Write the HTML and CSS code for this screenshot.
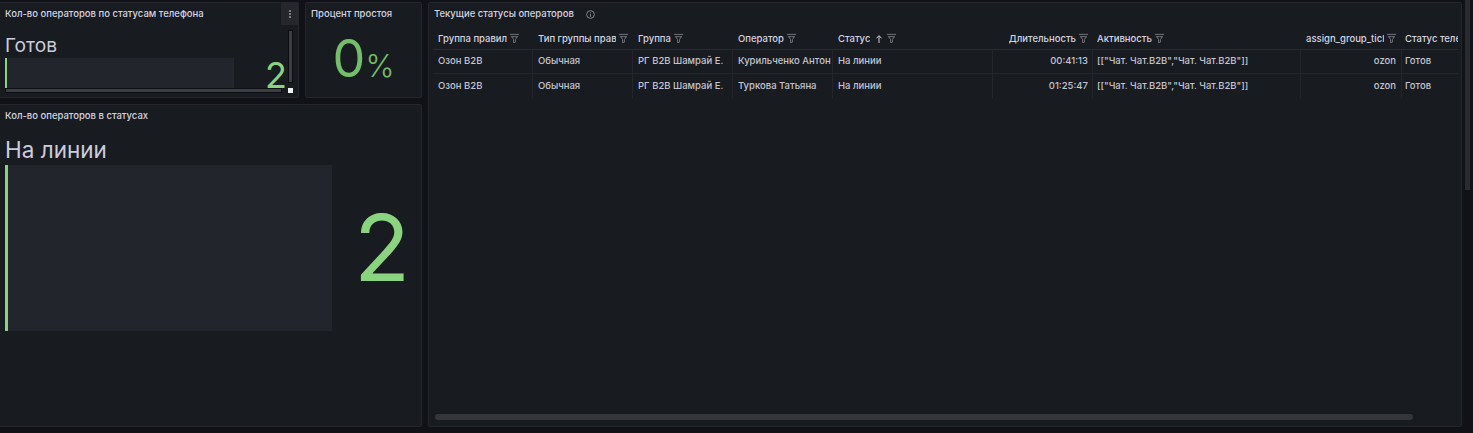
FILE: index.html
```html
<!DOCTYPE html>
<html lang="ru">
<head>
<meta charset="utf-8">
<title>Статусы операторов</title>
<link rel="stylesheet" href="styles.css">
</head>
<body>
<svg class="defs" width="0" height="0" aria-hidden="true">
  <symbol id="filter" viewBox="0 0 12 12"><path d="M1 1.5h10M2.2 4h7.6M3 4 5 7.2V10.5L7 10V7.2L9 4" fill="none" stroke="currentColor" stroke-width="1"/></symbol>
</svg>
<div class="dashboard">
  <section class="panel phone">
    <h2 class="panel-title">Кол-во операторов по статусам телефона</h2>
    <button class="menu-btn" aria-label="Меню"><span></span><span></span><span></span></button>
    <div class="scroll-area">
      <div class="stat-name small-name">Готов</div>
      <div class="stat-row small-row">
        <div class="bar small-bar"></div>
        <div class="stat-value small-value">2</div>
      </div>
      <div class="hbar"></div>
      <div class="vbar"></div>
      <div class="corner"></div>
    </div>
  </section>
  <section class="panel idle">
    <h2 class="panel-title">Процент простоя</h2>
    <div class="percent"><span class="pct-num">0</span><span class="pct-unit">%</span></div>
  </section>
  <section class="panel statuses">
    <h2 class="panel-title">Кол-во операторов в статусах</h2>
    <div class="stat-name big-name">На линии</div>
    <div class="stat-row big-row">
      <div class="bar big-bar"></div>
      <div class="stat-value big-value">2</div>
    </div>
  </section>
  <section class="panel table-panel">
    <div class="table-title">
      <h2 class="panel-title">Текущие статусы операторов</h2>
      <svg class="info" viewBox="0 0 12 12"><circle cx="6" cy="6" r="4.2" fill="none" stroke="currentColor"/><path d="M6 5.5v3M6 3.6v1" stroke="currentColor"/></svg>
    </div>
    <div class="table">
      <div class="row head">
        <div class="cell c1"><span class="label">Группа правил</span><svg class="flt"><use href="#filter"/></svg></div>
        <div class="cell c2"><span class="label">Тип группы прав</span><svg class="flt"><use href="#filter"/></svg></div>
        <div class="cell c3"><span class="label">Группа</span><svg class="flt"><use href="#filter"/></svg></div>
        <div class="cell c4"><span class="label">Оператор</span><svg class="flt"><use href="#filter"/></svg></div>
        <div class="cell c5"><span class="label">Статус</span><svg class="arrow" viewBox="0 0 8 10"><path d="M4 9V2M1.5 4.3 4 1.6l2.5 2.7" fill="none" stroke="currentColor"/></svg><svg class="flt"><use href="#filter"/></svg></div>
        <div class="cell c6 right"><span class="label">Длительность</span><svg class="flt"><use href="#filter"/></svg></div>
        <div class="cell c7"><span class="label">Активность</span><svg class="flt"><use href="#filter"/></svg></div>
        <div class="cell c8 right"><span class="label clip">assign_group_ticl</span><svg class="flt"><use href="#filter"/></svg></div>
        <div class="cell c9"><span class="label clip">Статус теле</span></div>
      </div>
      <div class="row body">
        <div class="cell c1">Озон B2B</div>
        <div class="cell c2">Обычная</div>
        <div class="cell c3">РГ B2B Шамрай Е.</div>
        <div class="cell c4">Курильченко Антон</div>
        <div class="cell c5">На линии</div>
        <div class="cell c6 right">00:41:13</div>
        <div class="cell c7">[["Чат. Чат.B2B","Чат. Чат.B2B"]]</div>
        <div class="cell c8 right">ozon</div>
        <div class="cell c9">Готов</div>
      </div>
      <div class="row body">
        <div class="cell c1">Озон B2B</div>
        <div class="cell c2">Обычная</div>
        <div class="cell c3">РГ B2B Шамрай Е.</div>
        <div class="cell c4">Туркова Татьяна</div>
        <div class="cell c5">На линии</div>
        <div class="cell c6 right">01:25:47</div>
        <div class="cell c7">[["Чат. Чат.B2B","Чат. Чат.B2B"]]</div>
        <div class="cell c8 right">ozon</div>
        <div class="cell c9">Готов</div>
      </div>
    </div>
    <div class="table-scroll"><div class="table-thumb"></div></div>
  </section>
</div>
<div class="page-scroll"><div class="page-thumb"></div></div>
</body>
</html>
```
FILE: styles.css
```css
* { box-sizing: border-box; }
html, body { height: 100%; }
body {
  margin: 0;
  background: #111217;
  color: #ccccdc;
  font-family: Inter, "Liberation Sans", sans-serif;
  overflow: hidden;
  display: flex;
}
.defs { position: absolute; }
.dashboard {
  width: 1466px;
  height: 433px;
  padding: 2px 4px 4px 0;
  display: grid;
  grid-template-columns: 300px 117px 1034px;
  grid-template-rows: 96px 323px;
  column-gap: 6px;
  row-gap: 6px;
  margin-left: -1px;
  flex: none;
}
.panel {
  position: relative;
  background: #181b1f;
  border: 1px solid #24262b;
  border-radius: 2px;
  overflow: hidden;
}
.statuses { grid-column: 1 / 3; grid-row: 2; }
.table-panel { grid-column: 3; grid-row: 1 / 3; }
.panel-title {
  margin: 0;
  font-size: 9.5px;
  font-weight: 500;
  line-height: 12px;
  color: #d4d4e0;
  white-space: nowrap;
}
.phone .panel-title, .statuses .panel-title { padding: 5px 0 0 5px; }
.idle .panel-title { padding: 5px 0 0 5px; }
.menu-btn {
  position: absolute;
  top: 0;
  right: 0;
  width: 17px;
  height: 22px;
  padding: 0;
  border: 0;
  background: #25272c;
  display: flex;
  flex-direction: column;
  align-items: center;
  justify-content: center;
  gap: 1px;
}
.menu-btn span { width: 2px; height: 2px; background: #7a7b82; }
.scroll-area { position: relative; height: 72px; }
.stat-name { color: #ccccdc; font-weight: 400; }
.small-name { font-size: 19.2px; line-height: 24px; padding: 13px 0 0 5px; }
.stat-row { display: flex; justify-content: space-between; }
.bar {
  background: #22252b;
  border-left: 2px solid #8ad47f;
}
.small-row { position: absolute; left: 5px; top: 38px; width: 281px; height: 30px; }
.small-bar { width: 229px; height: 30px; }
.stat-value { color: #8ad47f; font-weight: 400; }
.small-value { font-size: 36px; line-height: 36px; margin-top: -1px; margin-right: -1px; }
.hbar {
  position: absolute;
  left: 5px; top: 68px;
  width: 277px; height: 5px;
  background: #3c3e45;
  border: 1px solid #0d0e11;
}
.vbar {
  position: absolute;
  right: 5px; top: 10px;
  width: 5px; height: 53px;
  background: #3c3e45;
  border: 1px solid #0d0e11;
}
.corner {
  position: absolute;
  right: 5px; top: 68px;
  width: 5px; height: 5px;
  background: #f2f2f2;
}
.percent {
  display: flex;
  justify-content: center;
  align-items: baseline;
  color: #73bf69;
  padding-top: 8px;
  line-height: 62px;
}
.pct-num { font-size: 52px; }
.pct-unit { font-size: 31px; font-weight: 300; }
.big-name { font-size: 22.5px; line-height: 30px; padding: 13px 0 0 5px; }
.big-row { height: 166px; padding: 0 11px 0 5px; align-items: center; }
.big-bar { width: 327px; height: 166px; border-left-width: 3px; }
.big-value { font-size: 92px; line-height: 100px; }
.table-panel { display: flex; flex-direction: column; }
.table-title { display: flex; gap: 11px; padding: 5px 0 0 5px; height: 24px; align-items: flex-start; }
.info { width: 11px; height: 11px; margin-top: 1px; color: #8e8e98; }
.table { padding: 0 0 0 4px; flex: 1; width: 1029px; }
.row { display: grid; grid-template-columns: 100px 100px 100px 100px 160px 100px 208px 101px 56px; font-size: 9.5px; }
.head { height: 23px; padding-top: 1px; font-weight: 500; border-bottom: 1px solid #2a2c31; color: #d4d4e0; }
.body { height: 24px; padding-bottom: 2px; border-bottom: 1px solid #24262b; color: #c4c4d0; font-weight: 500; }
.body:last-child { border-bottom: 0; }
.cell {
  display: flex;
  align-items: center;
  padding: 0 4px 0 5px;
  white-space: nowrap;
  overflow: hidden;
  min-width: 0;
}
.c7 { padding-left: 4px; }
.c8 { padding-right: 5px; }
.c9 { padding-left: 3px; }
.body .cell { border-right: 1px solid #24262b; margin-bottom: -2px; padding-bottom: 2px; }
.body .c9 { border-right: 0; }
.right { justify-content: flex-end; }
.label { overflow: hidden; flex: 0 1 auto; min-width: 0; }
.c9 .label { flex: none; }
.flt { width: 11px; height: 11px; margin-left: 2px; color: #7a7b82; flex: none; }
.arrow { width: 8px; height: 10px; margin-left: 5px; margin-right: 1px; color: #ccccdc; flex: none; }
.table-scroll { height: 6px; margin: 0 3px 6px 6px; }
.table-thumb { width: 978px; height: 6px; border-radius: 3px; background: #34363b; }
.page-scroll { flex: 1; position: relative; }
.page-thumb { position: absolute; top: 0; left: 0; width: 5px; height: 190px; background: #2a2b30; }
```
